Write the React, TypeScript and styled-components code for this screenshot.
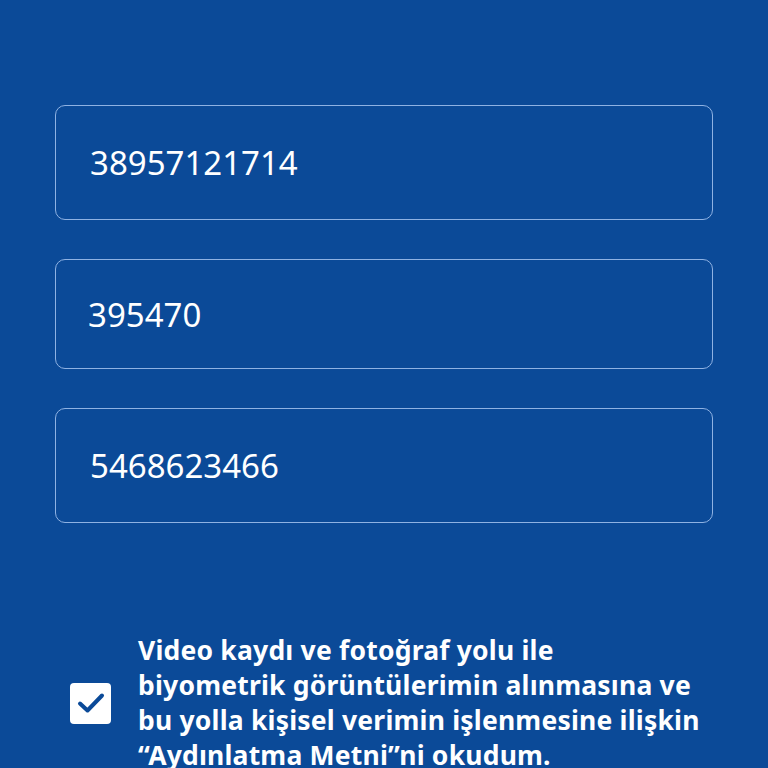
import React from 'react'
import styled, { createGlobalStyle } from 'styled-components'

const GlobalStyle = createGlobalStyle`
  html, body {
    margin: 0;
    padding: 0;
    background: #0b4a98;
  }
  body {
    font-family: "Noto Sans", "Open Sans", sans-serif;
    overflow: hidden;
  }
`

const Page = styled.div`
  width: 768px;
  height: 768px;
  box-sizing: border-box;
  padding: 105px 55px 0;
  background: #0b4a98;
  display: flex;
  flex-direction: column;
`

const Fields = styled.div`
  display: flex;
  flex-direction: column;
  gap: 39px;
`

const Field = styled.div<{ $h: number; $pad: number }>`
  height: ${p => p.$h}px;
  box-sizing: border-box;
  border: 1px solid #8fb2e3;
  border-radius: 10px;
  display: flex;
  align-items: center;
  padding-left: ${p => p.$pad}px;
  color: #ffffff;
  font-family: "Noto Sans", sans-serif;
  font-size: 33px;
  letter-spacing: 0;
`

const Consent = styled.label`
  margin-top: 110px;
  padding-left: 15px;
  display: flex;
  align-items: center;
  gap: 27px;
`

const Box = styled.span`
  flex: 0 0 auto;
  width: 41px;
  height: 41px;
  border-radius: 4px;
  background: #ffffff;
  display: flex;
  align-items: center;
  justify-content: center;
`

const ConsentText = styled.p`
  margin: 0;
  white-space: nowrap;
  color: #ffffff;
  font-family: "Noto Sans", sans-serif;
  font-weight: 700;
  font-size: 26.5px;
  letter-spacing: 0.2px;
  line-height: 35px;
`

const fields = [
  { value: '38957121714', h: 115, pad: 34 },
  { value: '395470', h: 110, pad: 32 },
  { value: '5468623466', h: 115, pad: 34 },
]

const consentLines = [
  'Video kaydı ve fotoğraf yolu ile',
  'biyometrik görüntülerimin alınmasına ve',
  'bu yolla kişisel verimin işlenmesine ilişkin',
  '“Aydınlatma Metni”ni okudum.',
]

export default function App() {
  return (
    <Page>
      <GlobalStyle />
      <Fields>
        {fields.map(f => (
          <Field key={f.value} $h={f.h} $pad={f.pad}>
            {f.value}
          </Field>
        ))}
      </Fields>
      <Consent>
        <Box>
          <svg width="28" height="22" viewBox="0 0 28 22">
            <path
              d="M3 11.5 L10.5 18.5 L25 3.5"
              fill="none"
              stroke="#0b4a98"
              strokeWidth="4"
              strokeLinecap="round"
              strokeLinejoin="round"
            />
          </svg>
        </Box>
        <ConsentText>
          {consentLines.map((line, i) => (
            <React.Fragment key={i}>
              {line}
              {i < consentLines.length - 1 && <br />}
            </React.Fragment>
          ))}
        </ConsentText>
      </Consent>
    </Page>
  )
}
